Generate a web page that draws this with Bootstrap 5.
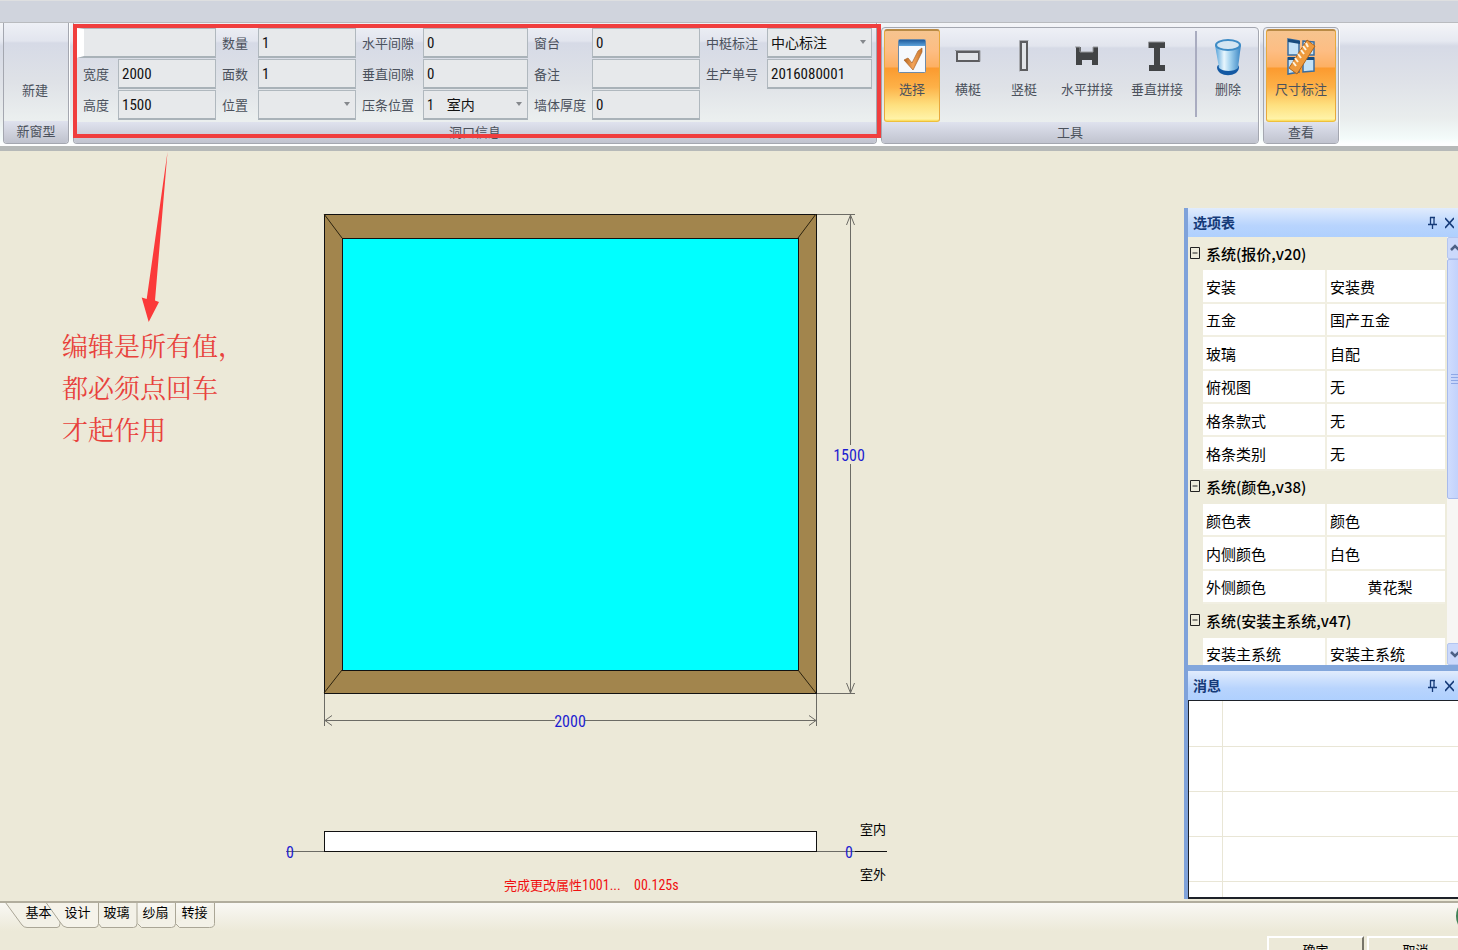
<!DOCTYPE html>
<html lang="zh-CN">
<head>
<meta charset="utf-8">
<meta name="viewport" content="width=device-width, initial-scale=1">
<title>门窗设计</title>
<link rel="stylesheet" href="https://cdn.jsdelivr.net/npm/bootstrap@5.3.0/dist/css/bootstrap.min.css">
<style>
  :root { --beige:#ece9d8; --ink:#4b515c; --narrow:"Roboto Condensed","Noto Sans CJK SC",sans-serif; }
  body { background:var(--beige); font-family:"Liberation Sans","Noto Sans CJK SC",sans-serif; font-size:13px; line-height:20px; color:#000; }
  .titlestrip { height:22px; background:#d0d4dd; border-top:1px solid #dedfe0; }

  /* ribbon */
  .ribbon { height:129px; border-top:1px solid #b9bbbf; border-bottom:5px solid #b6b9b8; padding:4px 0 2px 3px; gap:4px;
    background:linear-gradient(#f4f5f8 0,#e6e9f1 18px,#d6dae6 23px,#dfe2e8 60px,#e9eded 95px,#f3fbfa 115px,#fdfefe 121px); }
  .ribbon-group { border:1px solid #a4a7b0; border-radius:4px; overflow:hidden; box-shadow:1px 0 0 #fff; color:var(--ink);
    background:linear-gradient(#eef0f6 0,#e2e5ee 18px,#d6dae6 20px,#dfe2e7 60px,#ebefef 96px); }
  .group-tall { margin-top:-4px; border-top:0; border-radius:0 0 4px 4px; }
  .group-new { width:66px; }
  .group-title { height:22px; line-height:22px; text-align:center; background:linear-gradient(#dfe2ee,#bfc2cd); }
  .tool-row { padding:1px 2px 0; }
  .tool { display:flex; flex-direction:column; align-items:center; height:93px; padding:8px 0 0; border:1px solid transparent; border-radius:3px; background:none; color:var(--ink); line-height:20px; white-space:nowrap; }
  .tool svg { display:block; flex:none; margin-bottom:6px; }
  .tool.new-type { height:auto; justify-content:center; padding:38px 2px 0 0; }
  .tool.active { border-color:#b98a45 #e8a93c #eec03c; border-top-width:2px; padding-top:7px;
    background:linear-gradient(#f6c48f 0,#fdbd83 20px,#fdb063 36px,#fb9a2f 37px,#fdb148 56px,#fee07f 74px,#fff3a8 88px,#fbd94e); }
  .tool-rule { width:2px; height:86px; margin:2px 3px 0; background:#a9acc0; }
  .w-tool { width:56px; } .w-tool-wide { width:70px; }

  .fields { display:grid; grid-template-columns:44px 99px 41px 99px 66px 106px 63px 109px 66px 106px; grid-auto-rows:31px; padding:5px 3px 1px 0; }
  .fields label { padding-left:5px; line-height:31px; white-space:nowrap; }
  .fields label.edge { padding-left:9px; }
  .fields input, .fields select { width:100%; height:30px; min-width:0; padding:0 4px 0 3px; border:1px solid #b0b8be; border-bottom:2px solid #a9b2b8;
    border-radius:0; background:#e7e9eb; color:#111; font-family:var(--narrow); font-size:15px; line-height:26px; appearance:none; }
  .fields select { font-size:14px; background:#e7e9eb url("data:image/svg+xml,%3Csvg xmlns='http://www.w3.org/2000/svg' width='7' height='5'%3E%3Cpath d='M0 0h6L3 4z' fill='%2385888c'/%3E%3C/svg%3E") no-repeat right 4px center; white-space:pre; }
  .name-field { grid-column:1 / 3; padding:0 1px 0 3px; }
  .fields .name-field input { border-left:7px solid #fff; }
  .cell { padding-right:1px; }
  .marker { position:absolute; left:0; top:-3px; width:808px; height:114px; border:4px solid #f03e3e; z-index:3; pointer-events:none; }
  .group-wrap { position:relative; }

  /* work area */
  .work { min-height:0; }
  .canvas { min-width:0; }
  .canvas svg { display:block; width:100%; height:100%; }
  .dock { width:274px; margin-top:57px; margin-bottom:2px; border-left:4px solid #7fa2da; background:#83a7dc; overflow:hidden; }
  .dock-title { height:29px; padding:0 4px 0 5px; background:linear-gradient(#e1ecfd,#b8d4fd 60%,#afd0fe); color:#153a78; font-size:14px; font-weight:700; }
  .dock-title button { border:0; background:none; padding:0; height:16px; line-height:0; }
  .dock-gap { height:6px; }
  .options { height:428px; background:#eeecdc; }
  .opt-table { width:257px; height:434px; border-collapse:separate; border-spacing:0; table-layout:fixed; font-size:15px; font-family:"Open Sans","Noto Sans CJK SC",sans-serif; }
  .opt-table td, .opt-table th { padding:2px 0 0 3px; line-height:22px; border-bottom:2px solid #f1efe2; }
  .opt-table td { background:#fff; }
  .opt-table td:last-child { border-left:2px solid #f1efe2; }
  .opt-table th { background:#eeecdc; border-color:#eeecdc; font-weight:500; white-space:nowrap; font-family:"Noto Sans CJK SC",sans-serif; }
  .opt-table .gut, .opt-table th.gut { background:#eeecdc; border-color:#eeecdc; padding:0 0 0 2px; line-height:0; }
  .scroller { width:18px; background:#f7f6f4; margin-right:-7px; }
  .scroller button { width:17px; height:22px; padding:0; border:1px solid #b4c6f0; border-radius:2px; background:#cbd9fb; line-height:0; }
  .thumb { width:17px; height:240px; border:1px solid #a8bbec; border-radius:2px; background:linear-gradient(90deg,#cfdcfd,#bccdfa); }
  .messages { border:1px solid #1d2129; border-bottom-width:2px; border-right:0; background:#fff; overflow:hidden; }
  .msg-table { width:100%; border-collapse:collapse; table-layout:fixed; }
  .msg-table td { height:45px; border-bottom:1px solid #e9e6d6; padding:0; }
  .msg-table td + td { border-left:1px solid #e9e6d6; }

  /* bottom */
  .bottom { height:49px; border-top:2px solid #b1ad9d; background:linear-gradient(#f9f8f4,var(--beige) 28px); overflow:hidden; position:relative; }
  .tabs { position:relative; padding-left:19px; }
  .tabs svg { position:absolute; left:0; top:-2px; }
  .tabs button { position:relative; height:20px; padding:0; border:0; background:none; font-size:13px; line-height:20px; color:#000; }
  .w-tab { width:39px; }
  .dialog-actions { padding-top:33px; gap:3px; margin-right:-6px; }
  .dialog-actions button { width:97px; height:30px; padding:0; border:2px solid; border-color:#fff #77756a #77756a #fff; background:var(--beige); font-size:13px; line-height:26px; color:#000; }
  .bubble { position:absolute; right:-36px; top:-6px; width:38px; height:38px; border-radius:50%; background:#3f8055; }
</style>
</head>
<body class="vh-100 overflow-hidden d-flex flex-column">
<header class="flex-shrink-0">
  <div class="titlestrip"></div>
  <div class="ribbon d-flex align-items-stretch">
    <section class="ribbon-group group-tall group-new flex-shrink-0 d-flex flex-column justify-content-between">
      <button type="button" class="tool new-type w-100 flex-grow-1">新建</button>
      <div class="group-title">新窗型</div>
    </section>

    <div class="group-wrap flex-shrink-0 d-flex">
      <section class="ribbon-group group-tall d-flex flex-column justify-content-between">
        <form class="fields">
          <div class="name-field"><input type="text" aria-label="名称"></div>
          <label for="f-num">数量</label><div class="cell"><input id="f-num" value="1"></div>
          <label for="f-hgap">水平间隙</label><div class="cell"><input id="f-hgap" value="0"></div>
          <label for="f-sill">窗台</label><div class="cell"><input id="f-sill" value="0"></div>
          <label for="f-mark">中梃标注</label><div class="cell"><select id="f-mark"><option>中心标注</option></select></div>

          <label class="edge" for="f-w">宽度</label><div class="cell"><input id="f-w" value="2000"></div>
          <label for="f-face">面数</label><div class="cell"><input id="f-face" value="1"></div>
          <label for="f-vgap">垂直间隙</label><div class="cell"><input id="f-vgap" value="0"></div>
          <label for="f-note">备注</label><div class="cell"><input id="f-note"></div>
          <label for="f-order">生产单号</label><div class="cell"><input id="f-order" value="2016080001"></div>

          <label class="edge" for="f-h">高度</label><div class="cell"><input id="f-h" value="1500"></div>
          <label for="f-pos">位置</label><div class="cell"><select id="f-pos"><option></option></select></div>
          <label for="f-bead">压条位置</label><div class="cell"><select id="f-bead"><option>1&nbsp;&nbsp;&nbsp;&nbsp;室内</option></select></div>
          <label for="f-wall">墙体厚度</label><div class="cell"><input id="f-wall" value="0"></div>
        </form>
        <div class="group-title">洞口信息</div>
      </section>
      <div class="marker"></div>
    </div>

    <section class="ribbon-group flex-shrink-0 d-flex flex-column justify-content-between">
      <div class="tool-row d-flex">
        <button type="button" class="tool active w-tool">
          <svg width="30" height="36" viewBox="0 0 30 36"><defs><linearGradient id="cb" x2="0" y2="1"><stop stop-color="#1f5c9e"/><stop offset="1" stop-color="#5da3dc"/></linearGradient><linearGradient id="ck" x2="1"><stop stop-color="#b5651d"/><stop offset=".5" stop-color="#f5a55a"/><stop offset="1" stop-color="#c8742a"/></linearGradient></defs><rect x="1.500" y="1.500" width="27" height="33" rx="1" fill="#f6f9fd" stroke="#6f8ba8"/><path d="M2 2h26v6H2z" fill="url(#cb)"/><path d="M7 22l4-2 4 5 6-12 4-3v4L16 32z" fill="url(#ck)" stroke="#a8632a" stroke-width=".7"/></svg>选择</button>
        <button type="button" class="tool w-tool">
          <svg width="30" height="36" viewBox="0 0 30 36"><path d="M4 14h22v9H4z" fill="#e2e4e8" stroke="#5d5d60" stroke-width="2"/><path d="M2 12.500h25v11" fill="none" stroke="#999ba0"/></svg>横梃</button>
        <button type="button" class="tool w-tool">
          <svg width="30" height="36" viewBox="0 0 30 36"><path d="M12 4h6v28h-6z" fill="#e2e4e8" stroke="#5d5d60" stroke-width="2"/><path d="M10.500 33.500V2.500h9" fill="none" stroke="#a9abb0"/></svg>竖梃</button>
        <button type="button" class="tool w-tool-wide">
          <svg width="30" height="36" viewBox="0 0 30 36"><path d="M4 9h5v5h12V9h5v18h-6v-5h-10v5H4z" fill="#424446"/><path d="M3 9h5v5h13V9h5" fill="none" stroke="#96989c"/></svg>水平拼接</button>
        <button type="button" class="tool w-tool-wide">
          <svg width="30" height="36" viewBox="0 0 30 36"><path d="M7 4h16v6h-5v17h5v6H7v-6h5V10H7z" fill="#424446"/><path d="M6.500 10V4h16" fill="none" stroke="#96989c"/></svg>垂直拼接</button>
        <div class="tool-rule"></div>
        <button type="button" class="tool w-tool">
          <svg width="30" height="38" viewBox="0 0 30 38" class="mb-1"><defs><linearGradient id="bin" x2="1"><stop stop-color="#4f9fd8"/><stop offset=".35" stop-color="#e8f6fd"/><stop offset=".6" stop-color="#9fd0ee"/><stop offset="1" stop-color="#3b86c4"/></linearGradient></defs><path d="M4 29c0 11 22 11 22 0l-1-2H5z" fill="#1459a3"/><path d="M2 7l4 23c4 4 15 4 19 0l3-23z" fill="url(#bin)"/><ellipse cx="15" cy="7" rx="13" ry="6" fill="#3f8cc6"/><ellipse cx="15" cy="7" rx="11" ry="4" fill="#d5e6f2"/></svg>删除</button>
      </div>
      <div class="group-title">工具</div>
    </section>

    <section class="ribbon-group flex-shrink-0 d-flex flex-column justify-content-between">
      <div class="tool-row d-flex">
        <button type="button" class="tool active w-tool-wide">
          <svg width="30" height="38" viewBox="0 0 30 38" class="mb-1"><path d="M2 1l11 2v14H2zM17 3l11 1v13H17zM2 20h11v14l-11 2zM17 20h11v13l-11 1z" fill="#c4e2f7" stroke="#3a6da0" stroke-width="1.500"/><path d="M2 1l12 2v3L2 4zM2 19h12v3H2zM17 19h11v3H17z" fill="#174b7d"/><path d="M21 2l8 6L11 36l-8-6z" fill="#ee9a3d" stroke="#b26519"/><path d="M20 5l2 4M17 8l3 4M15 12l3 4M12 16l3 4M9 20l3 4M7 24l3 4" stroke="#fff3dd" stroke-width="2"/></svg>尺寸标注</button>
      </div>
      <div class="group-title">查看</div>
    </section>
  </div>
</header>

<main class="work d-flex flex-grow-1">
  <div class="canvas flex-grow-1">
    <!-- elevation, dimensions and plan of the window -->
    <svg viewBox="0 151 1184 750" preserveAspectRatio="xMinYMin meet" font-family="Roboto Condensed, Noto Sans CJK SC, sans-serif">
      <path d="M167.500 152L155 300.500l4 1.500-10.300 20-7-24.500 5 1.500z" fill="#fb3a3a"/>
      <g font-family="Noto Serif CJK SC, Noto Sans CJK SC, serif" font-size="26" fill="#e8423c">
        <text x="62" y="356">编辑是所有值，</text><text x="62" y="398">都必须点回车</text><text x="62" y="440">才起作用</text>
      </g>
      <g stroke="#111" shape-rendering="crispEdges">
        <rect x="324.500" y="214.500" width="492" height="479" fill="#a2854d"/>
        <rect x="342.500" y="238.500" width="456" height="432" fill="#0ff"/>
      </g>
      <path d="M324 214l18 24M816 214l-18 24M324 693l18-23M816 693l-18-23" stroke="#2b220e" fill="none"/>
      <g stroke="#6c6b65" fill="none">
        <path d="M817 214.500h38M817 693.500h38M850.500 215v230M850.500 464v229M324.500 694v32M816.500 694v32M325 720.500h230M585 720.500h231"/>
        <path d="M846.500 225l4-10 4 10M846.500 683l4 10 4-10M332 715.500l-7 5 7 5M809 715.500l7 5-7 5M286 851.500h38M817 851.500h38"/>
      </g>
      <path d="M855 851.500h32" stroke="#111"/>
      <rect x="324.500" y="831.500" width="492" height="20" fill="#fff" stroke="#111"/>
      <g fill="#1d1dd0" font-size="16" text-anchor="middle">
        <text x="849" y="461">1500</text><text x="570" y="727">2000</text><text x="290" y="858">0</text><text x="849" y="858">0</text>
      </g>
      <g font-size="13"><text x="860" y="834">室内</text><text x="860" y="879">室外</text></g>
      <g font-size="13" fill="#f01010"><text x="504" y="890">完成更改属性</text><text x="582" y="890" font-size="14">1001...</text><text x="634" y="890" font-size="14">00.125s</text></g>
    </svg>
  </div>

  <aside class="dock flex-shrink-0 d-flex flex-column">
    <div class="dock-title d-flex align-items-center flex-shrink-0">
      <span class="flex-grow-1">选项表</span>
      <button type="button" class="me-2" aria-label="固定"><svg width="9" height="14" viewBox="0 0 9 14"><path d="M2 1.500h5M2.500 1v7M6 1v7M0 8.500h9M4.500 9v4" stroke="#153a78" stroke-width="1.300" fill="none"/></svg></button>
      <button type="button" aria-label="关闭"><svg width="9" height="14" viewBox="0 0 9 14"><path d="M0 2l9 10M9 2l-9 10" stroke="#153a78" stroke-width="1.600"/></svg></button>
    </div>
    <div class="options d-flex overflow-hidden flex-shrink-0">
      <table class="opt-table flex-shrink-0">
        <colgroup><col style="width:15px"><col style="width:122px"><col></colgroup>
        <tbody>
          <tr><th class="gut"><svg width="10" height="12" viewBox="0 0 10 12"><path d="M.5.500h9v11h-9zM2.500 6h5" fill="none" stroke="#222"/></svg></th><th colspan="2">系统(报价,v20)</th></tr>
          <tr><td class="gut"></td><td>安装</td><td>安装费</td></tr>
          <tr><td class="gut"></td><td>五金</td><td>国产五金</td></tr>
          <tr><td class="gut"></td><td>玻璃</td><td>自配</td></tr>
          <tr><td class="gut"></td><td>俯视图</td><td>无</td></tr>
          <tr><td class="gut"></td><td>格条款式</td><td>无</td></tr>
          <tr><td class="gut"></td><td>格条类别</td><td>无</td></tr>
          <tr><th class="gut"><svg width="10" height="12" viewBox="0 0 10 12"><path d="M.5.500h9v11h-9zM2.500 6h5" fill="none" stroke="#222"/></svg></th><th colspan="2">系统(颜色,v38)</th></tr>
          <tr><td class="gut"></td><td>颜色表</td><td>颜色</td></tr>
          <tr><td class="gut"></td><td>内侧颜色</td><td>白色</td></tr>
          <tr><td class="gut"></td><td>外侧颜色</td><td class="text-center pe-0 ps-2">黄花梨</td></tr>
          <tr><th class="gut"><svg width="10" height="12" viewBox="0 0 10 12"><path d="M.5.500h9v11h-9zM2.500 6h5" fill="none" stroke="#222"/></svg></th><th colspan="2">系统(安装主系统,v47)</th></tr>
          <tr><td class="gut"></td><td>安装主系统</td><td>安装主系统</td></tr>
        </tbody>
      </table>
      <div class="scroller flex-shrink-0 d-flex flex-column ms-auto">
        <button type="button" aria-label="向上"><svg width="11" height="10" viewBox="0 0 11 10"><path d="M1 7l4-4 4 4" fill="none" stroke="#4d6185" stroke-width="2.500"/></svg></button>
        <div class="thumb d-flex align-items-center justify-content-center"><svg width="10" height="12" viewBox="0 0 10 12"><path d="M0 1.500h10M0 4.500h10M0 7.500h10M0 10.500h10" stroke="#8ea8e6"/></svg></div>
        <button type="button" class="mt-auto" aria-label="向下"><svg width="11" height="10" viewBox="0 0 11 10"><path d="M1 3l4 4 4-4" fill="none" stroke="#4d6185" stroke-width="2.500"/></svg></button>
      </div>
    </div>
    <div class="dock-gap flex-shrink-0"></div>
    <div class="dock-title d-flex align-items-center flex-shrink-0">
      <span class="flex-grow-1">消息</span>
      <button type="button" class="me-2" aria-label="固定"><svg width="9" height="14" viewBox="0 0 9 14"><path d="M2 1.500h5M2.500 1v7M6 1v7M0 8.500h9M4.500 9v4" stroke="#153a78" stroke-width="1.300" fill="none"/></svg></button>
      <button type="button" aria-label="关闭"><svg width="9" height="14" viewBox="0 0 9 14"><path d="M0 2l9 10M9 2l-9 10" stroke="#153a78" stroke-width="1.600"/></svg></button>
    </div>
    <div class="messages flex-grow-1">
      <table class="msg-table">
        <colgroup><col style="width:33px"><col></colgroup>
        <tbody><tr><td></td><td></td></tr><tr><td></td><td></td></tr><tr><td></td><td></td></tr><tr><td></td><td></td></tr><tr><td></td><td></td></tr></tbody>
      </table>
    </div>
  </aside>
</main>

<footer class="bottom flex-shrink-0 d-flex justify-content-between">
  <nav class="tabs d-flex align-items-start">
    <svg width="216" height="28" viewBox="0 0 216 28" fill="#f3f1e7" stroke="#aaa696">
      <path d="M5.500 1.500L22 24q2 2.500 5 2.500h30q3 0 3-4V1.500z"/>
      <path d="M98.500 1.500v21l3 4h32q3.500 0 3.500-4v-21M137.500 22.500l4 4h30q4 0 4-4v-21M175.500 22.500l4 4h30q5 0 5-4v-21"/>
      <path d="M45 0L60 21q3 5.500 7 5.500h28q3.500 0 3.500-4V0" fill="#f5f3ea"/>
      <path d="M46 0h52v2H47z" fill="#ece9d8" stroke="none"/>
    </svg>
    <button type="button" class="w-tab">基本</button><button type="button" class="w-tab">设计</button><button type="button" class="w-tab">玻璃</button><button type="button" class="w-tab">纱扇</button><button type="button" class="w-tab">转接</button>
  </nav>
  <div class="dialog-actions d-flex"><button type="button">确定</button><button type="button">取消</button></div>
  <div class="bubble"></div>
</footer>
<script src="https://cdn.jsdelivr.net/npm/bootstrap@5.3.0/dist/js/bootstrap.bundle.min.js"></script>
</body>
</html>
